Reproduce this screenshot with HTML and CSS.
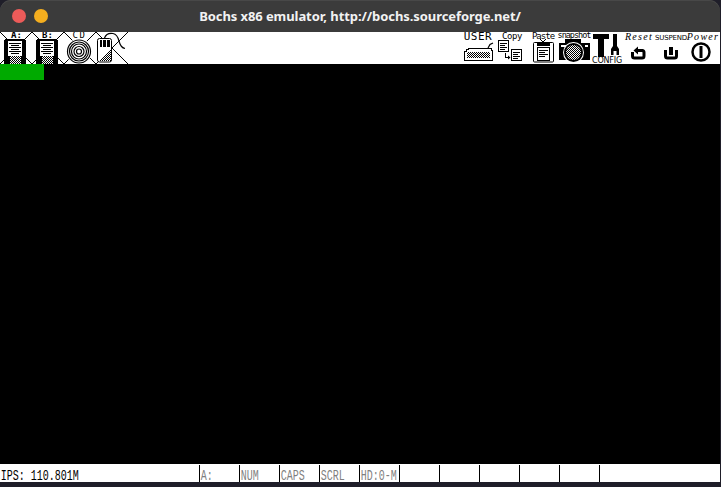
FILE: index.html
```html
<!DOCTYPE html>
<html lang="en">
<head>
<meta charset="utf-8">
<title>Bochs x86 emulator</title>
<link rel="stylesheet" href="styles.css">
</head>
<body>
<div class="window">
  <header class="titlebar">
    <span class="light light-red"></span>
    <span class="light light-yellow"></span>
    <h1 class="title">Bochs x86 emulator, http://bochs.sourceforge.net/</h1>
  </header>
  <nav class="toolbar">
    <div class="tool-group">
      <svg class="tool" viewBox="0 32 32 32">
        <defs>
          <pattern id="dither" patternUnits="userSpaceOnUse" width="2" height="2">
            <rect class="k" x="0" y="0" width="1" height="1"/>
            <rect class="k" x="1" y="1" width="1" height="1"/>
          </pattern>
        </defs>
        <path class="ln" d="M0 32L32 64M32 32L0 64"/>
        <path class="k" d="M4 39h22v25H4z"/>
        <path class="w" d="M4 39h1v1H4zM25 39h1v1h-1z"/>
        <rect class="w" x="8" y="41" width="14" height="15"/>
        <path class="ln px" d="M9 43.500h12M11 45.500h8M9 47.500h12M11 49.500h8M9 51.500h12M11 53.500h8"/>
        <rect class="w" x="10" y="56" width="11" height="8"/>
        <rect fill="url(#dither)" class="px" x="10" y="56" width="11" height="8"/>
        <text class="lbl bold" x="16.500" y="38" text-anchor="middle">A:</text>
      </svg>
      <svg class="tool" viewBox="32 32 32 32">
        <path class="ln" d="M32 32L64 64M64 32L32 64"/>
        <path class="k" d="M36 39h22v25H36z"/>
        <path class="w" d="M36 39h1v1h-1zM57 39h1v1h-1z"/>
        <rect class="w" x="40" y="41" width="14" height="15"/>
        <path class="ln px" d="M41 43.500h12M43 45.500h8M41 47.500h12M43 49.500h8M41 51.500h12M43 53.500h8"/>
        <rect class="w" x="42" y="56" width="11" height="8"/>
        <rect fill="url(#dither)" class="px" x="42" y="56" width="11" height="8"/>
        <text class="lbl bold" x="47.500" y="38" text-anchor="middle">B:</text>
      </svg>
      <svg class="tool" viewBox="64 32 32 32">
        <path class="ln" d="M64 32L96 64M96 32L64 64"/>
        <circle class="w" cx="79" cy="51.500" r="13"/>
        <g class="rings">
          <circle cx="79" cy="51.500" r="11.500"/>
          <circle cx="79" cy="51.500" r="9.500"/>
          <circle cx="79" cy="51.500" r="7.500"/>
          <circle cx="79" cy="51.500" r="5"/>
          <circle cx="79" cy="51.500" r="2.500"/>
        </g>
        <text class="lbl spaced" x="79.500" y="38" text-anchor="middle">CD</text>
      </svg>
      <svg class="tool" viewBox="96 32 32 32">
        <path class="ln" d="M96 32L128 64M128 32L96 64"/>
        <path class="wire" d="M104.500 38C106 34 110 33 113 33.500C116 34 118 37 119 41C120 45 122 48 125 48.500"/>
        <rect class="w stroke" x="97.500" y="38.500" width="14" height="23.500" rx="2"/>
        <rect class="k" x="100" y="40" width="2" height="7"/>
        <rect class="k" x="103" y="40" width="3" height="7"/>
        <rect class="k" x="107" y="40" width="3" height="7"/>
        <path fill="url(#dither)" class="px" d="M111 50L100 61H111z"/>
        <path class="ln" d="M111 50L100 61"/>
      </svg>
    </div>
    <div class="tool-group">
      <svg class="tool" viewBox="462 32 32 32">
        <text class="lbl wide" x="478" y="39.500" text-anchor="middle">USER</text>
        <path class="wire" d="M488 48L490 44.500L493 43"/>
        <path class="w stroke px" d="M464.500 60.500V51.500H466.500V49.500H468.500V48.500H491.500V50.500H492.500V60.500z"/>
        <rect fill="url(#dither)" class="px" x="467" y="52" width="23" height="6"/>
      </svg>
      <svg class="tool" viewBox="494 32 32 32">
        <text class="lbl tight" x="512" y="38.500" text-anchor="middle">Copy</text>
        <rect class="w stroke px" x="498.500" y="40.500" width="10" height="11"/>
        <path class="ln px" d="M500 43.500h7M500 45.500h5M500 47.500h7M500 49.500h5"/>
        <rect class="w stroke px" x="511.500" y="49.500" width="10" height="11"/>
        <path class="ln px" d="M513 52.500h7M513 54.500h5M513 56.500h7M513 58.500h5"/>
        <path class="ln px" d="M505.500 53V57.500H510"/>
        <path class="k" d="M508 55.500l2.500 2l-2.500 2z"/>
      </svg>
      <svg class="tool" viewBox="526 32 32 32">
        <rect class="w stroke" x="533.500" y="42.500" width="20" height="19.500" rx="1"/>
        <rect class="w stroke px" x="537.500" y="47.500" width="12" height="13"/>
        <path class="ln px" d="M539 50.500h9M539 52.500h6M539 54.500h9M539 56.500h6"/>
        <path class="k" d="M537 43h13v3H537z"/>
        <text class="lbl tighter" x="543" y="38.500" text-anchor="middle">Paste</text>
        <path class="ln" d="M540 39l3 3l3 -3M543 42v3"/>
      </svg>
      <svg class="tool" viewBox="558 32 32 32">
        <text class="lbl small" x="574" y="37.500" text-anchor="middle">snapshot</text>
        <path class="k" d="M559 43h6v-4h16v4h9v17h-31z"/>
        <path class="w" d="M561 45h5v2h-5zM585 45h3v2h-3z"/>
        <circle class="w" cx="573.500" cy="52.500" r="10.500"/>
        <circle class="k" cx="573.500" cy="52.500" r="9.500"/>
        <circle class="w" cx="573.500" cy="52.500" r="7.500"/>
        <circle fill="url(#dither)" class="px" cx="573.500" cy="52.500" r="7.500"/>
      </svg>
      <svg class="tool" viewBox="590 32 32 32">
        <path class="k" d="M593 34h16v5h-5v18h-6V39h-5z"/>
        <path class="k" d="M613 34h4v12l2 3v6h-2.500v-4h-3v4H611v-6l2-3z"/>
        <text class="lbl config" x="607" y="63" text-anchor="middle">CONFIG</text>
      </svg>
      <svg class="tool" viewBox="622 32 32 32">
        <text class="lbl serif" x="639" y="40" text-anchor="middle">Reset</text>
        <path class="thick" d="M638 50.500H642.500A2 2 0 0 1 644 52.500V56A2 2 0 0 1 642 58H634.500A2 2 0 0 1 632.500 56V52"/>
        <path class="k" d="M638 46.500v8l-4.500 -4z"/>
      </svg>
      <svg class="tool" viewBox="654 32 32 32">
        <text class="lbl caps" x="671" y="39.500" text-anchor="middle">SUSPEND</text>
        <path class="thick" d="M667 51.500H665.500V56A2 2 0 0 0 667.500 58H674.500A2 2 0 0 0 676.500 56V51.500H675"/>
        <path class="k" d="M669 47h4v8h-4z"/>
      </svg>
      <svg class="tool" viewBox="686 32 32 32">
        <text class="lbl serif" x="703" y="40" text-anchor="middle">Power</text>
        <circle class="ring" cx="701" cy="52" r="8.500"/>
        <path class="k" d="M699.500 46h3v12h-3z"/>
      </svg>
    </div>
  </nav>
  <main class="screen">
    <div class="progress"></div>
  </main>
  <footer class="statusbar">
    <div class="cell cell-main"><span class="mono">IPS: 110.801M</span></div>
    <div class="cell off"><span class="mono">A:</span></div>
    <div class="cell off"><span class="mono">NUM</span></div>
    <div class="cell off"><span class="mono">CAPS</span></div>
    <div class="cell off"><span class="mono">SCRL</span></div>
    <div class="cell off"><span class="mono">HD:0-M</span></div>
    <div class="cell"></div>
    <div class="cell"></div>
    <div class="cell"></div>
    <div class="cell"></div>
    <div class="cell"></div>
    <div class="cell-rest"></div>
  </footer>
</div>
</body>
</html>
```

FILE: styles.css
```css
html, body {
  margin: 0;
  padding: 0;
  background: #1f1e29;
}
body {
  width: 721px;
  height: 487px;
}
.window {
  display: flex;
  flex-direction: column;
  width: 720px;
  height: 482px;
}
.titlebar {
  height: 32px;
  flex: none;
  display: flex;
  align-items: center;
  justify-content: center;
  background: #3b3b3b;
  border-radius: 11px 11px 0 0;
  box-shadow: inset 0 1px #484848;
  position: relative;
}
.light {
  position: absolute;
  top: 9px;
  width: 14px;
  height: 14px;
  border-radius: 50%;
}
.light-red { left: 12px; background: #ec5b59; }
.light-yellow { left: 34px; background: #f4ae1f; }
.title {
  margin: 0;
  font: bold 13px "Noto Sans", sans-serif;
  letter-spacing: -0.08px;
  color: #f2f2f2;
}
.toolbar {
  height: 32px;
  flex: none;
  display: flex;
  justify-content: space-between;
  padding-right: 2px;
  background: #fff;
}
.tool-group { display: flex; }
.tool {
  display: block;
  width: 32px;
  height: 32px;
  overflow: visible;
}
.k { fill: #000; }
.w { fill: #fff; }
.px { shape-rendering: crispEdges; }
.stroke { stroke: #000; stroke-width: 1; }
.ln { stroke: #000; stroke-width: 1; fill: none; }
.wire { stroke: #000; stroke-width: 1.2; fill: none; }
.thick { stroke: #000; stroke-width: 3; fill: none; }
.ring { stroke: #000; stroke-width: 2.500; fill: #fff; }
.rings circle { stroke: #000; stroke-width: 1.2; fill: none; }
.lbl { font: 9px "DejaVu Sans Mono", monospace; fill: #000; }
.bold { font-weight: bold; }
.spaced { letter-spacing: 1.500px; }
.tight { letter-spacing: -0.400px; }
.tighter { letter-spacing: -1px; }
.wide { font-size: 11px; letter-spacing: 0.500px; }
.small { font-size: 8.500px; letter-spacing: -1px; }
.caps { font: 7px "DejaVu Sans", sans-serif; letter-spacing: -0.200px; }
.config { font: 8px "DejaVu Sans", sans-serif; letter-spacing: -0.200px; }
.serif { font: italic 10px "Liberation Serif", serif; letter-spacing: 1.300px; }
.screen {
  flex: 1;
  background: #000;
}
.progress {
  width: 44px;
  height: 16px;
  background: #00aa00;
}
.statusbar {
  height: 18px;
  flex: none;
  display: flex;
  background: #fff;
}
.cell {
  flex: none;
  display: flex;
  align-items: flex-end;
  width: 40px;
  box-sizing: border-box;
  margin-top: 1px;
  border-right: 1px solid #000;
}
.cell-main { width: 200px; }
.cell-rest { flex: 1; }
.off { color: #7f7f7f; }
.mono {
  display: block;
  width: 100%;
  font: 14px/11px "Liberation Mono", monospace;
  transform: scaleX(0.714);
  transform-origin: left center;
  white-space: pre;
  padding-left: 1px;
}
```
